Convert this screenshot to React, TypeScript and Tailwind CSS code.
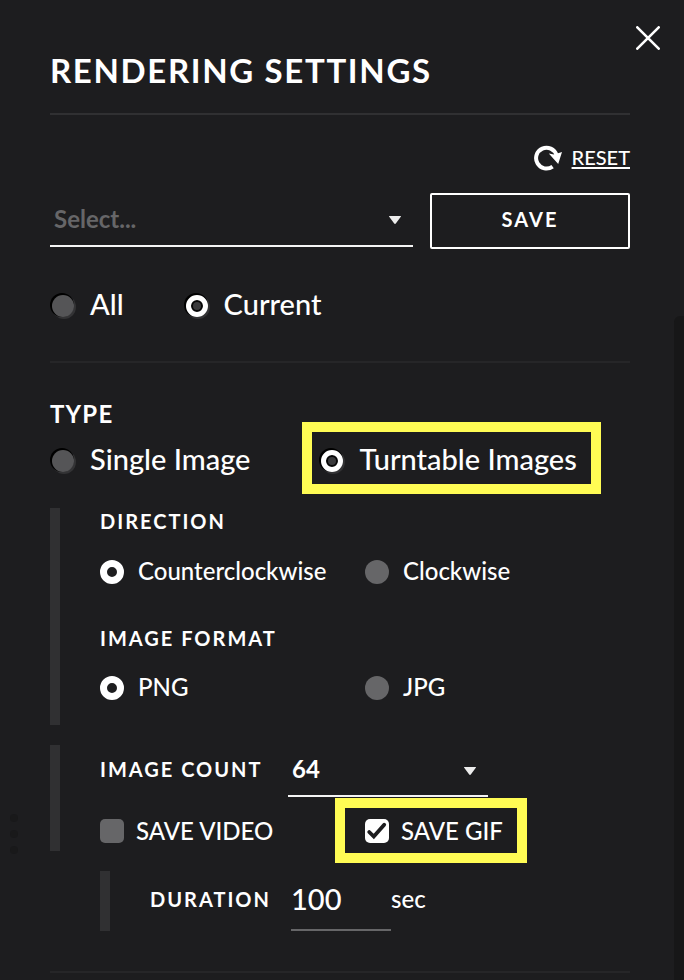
import * as React from "react";
import clsx from "clsx";

interface ChoiceProps {
  name: string;
  label: string;
  checked: boolean;
  onChange: () => void;
  size?: "lg" | "md";
  highlighted?: boolean;
}

function Caret() {
  return (
    <svg viewBox="0 0 12 8" className="pointer-events-none -ml-6 mt-[2px] h-2 w-3 shrink-0" aria-hidden="true">
      <path d="M0.5 0h11c.5 0 .6.4.3.8L6.8 7.5c-.4.6-1.2.6-1.6 0L.2.8C-.1.4 0 0 .5 0z" fill="#ececec" />
    </svg>
  );
}

function Divider({ strong }: { strong?: boolean }) {
  return <hr className={clsx("border-t-2", strong ? "border-[#303032]" : "border-[#262628]")} />;
}

// Yellow callout frame drawn over a control.
function Callout({ className }: { className: string }) {
  return <span className={clsx("pointer-events-none absolute border-[10px] border-[#fffc54]", className)} />;
}

function Choice({ name, label, checked, onChange, size = "md", highlighted }: ChoiceProps) {
  const large = size === "lg";
  return (
    <label
      className={clsx(
        "relative flex w-fit cursor-pointer items-center gap-[14px] whitespace-nowrap",
        large ? "text-[29px] leading-[34px]" : "text-2xl leading-[30px]"
      )}
    >
      <input
        type="radio"
        name={name}
        checked={checked}
        onChange={onChange}
        className={clsx(
          "shrink-0 appearance-none rounded-full",
          large
            ? "mx-[2px] mt-[2px] size-[22px] bg-[#555557] shadow-[-1px_-1px_0_1px_#000,1px_1px_0_1px_#333335] checked:border-[5px] checked:border-white checked:bg-[#39393b] checked:shadow-[inset_0_0_0_2px_#060606,-1px_-1px_0_1px_#000,1px_1px_0_1px_#333335]"
            : "size-6 bg-[#666668] checked:border-[7px] checked:border-white checked:bg-[#1d1d1f]"
        )}
      />
      <span className="pb-[2px]">{label}</span>
      {highlighted && <Callout className="-top-5 -right-6 -bottom-4 -left-[17px]" />}
    </label>
  );
}

interface TickProps {
  label: string;
  checked: boolean;
  onChange: (v: boolean) => void;
  highlighted?: boolean;
}

function Tick({ label, checked, onChange, highlighted }: TickProps) {
  return (
    <label className="relative flex w-fit cursor-pointer items-center gap-3 text-2xl whitespace-nowrap">
      <span className="grid size-6 shrink-0">
        <input
          type="checkbox"
          checked={checked}
          onChange={(e) => onChange(e.target.checked)}
          className="col-start-1 row-start-1 size-6 appearance-none rounded-[5px] bg-[#666668] checked:bg-white"
        />
        {checked && (
          <svg viewBox="0 0 24 24" className="pointer-events-none col-start-1 row-start-1 size-6" aria-hidden="true">
            <path
              d="M4.2 13 8.8 17.6 19.2 5.8"
              fill="none"
              stroke="#1d1d1f"
              strokeWidth="3.8"
              strokeLinecap="round"
              strokeLinejoin="miter"
            />
          </svg>
        )}
      </span>
      {label}
      {highlighted && <Callout className="-top-[17px] -right-6 -bottom-4 -left-[30px]" />}
    </label>
  );
}

const HEADING = "text-xl leading-[26px] font-bold tracking-widest";

export default function App() {
  const [preset, setPreset] = React.useState("");
  const [scope, setScope] = React.useState("current");
  const [type, setType] = React.useState("turntable");
  const [direction, setDirection] = React.useState("ccw");
  const [format, setFormat] = React.useState("png");
  const [count, setCount] = React.useState("64");
  const [video, setVideo] = React.useState(false);
  const [gif, setGif] = React.useState(true);
  const [duration, setDuration] = React.useState("100");

  return (
    <div className="relative flex min-h-screen bg-[#1d1d1f] font-['Lato','Liberation_Sans',sans-serif] font-medium text-white">
      {/* Grip on the panel's edge */}
      <div className="absolute top-[814px] left-[10px] flex flex-col gap-2">
        <span className="size-2 rounded-full bg-[#19191a]" />
        <span className="size-2 rounded-full bg-[#19191a]" />
        <span className="size-2 rounded-full bg-[#19191a]" />
      </div>

      <main className="flex-1 pr-11 pl-[50px]">
        <header className="flex items-start justify-between pb-[25px]">
          <h1 className="pt-[52px] text-[33px] leading-9 font-bold tracking-wider whitespace-nowrap">
            RENDERING SETTINGS
          </h1>
          <button type="button" aria-label="Close" className="mt-[26px] -mr-[30px]">
            <svg viewBox="0 0 24 24" className="size-6" fill="none" stroke="white" strokeWidth="2.6" strokeLinecap="round">
              <path d="M1.3 1.3 22.7 22.7M22.7 1.3 1.3 22.7" />
            </svg>
          </button>
        </header>
        <Divider strong />

        <div className="mt-7 flex justify-end">
          <button type="button" className="flex items-center gap-[10px] text-xl leading-7">
            <svg viewBox="0 0 28 26" className="mt-[2px] h-[26px] w-7" aria-hidden="true">
              <path d="M18.6 21.6A10.4 10.4 0 1 1 22.4 10" fill="none" stroke="white" strokeWidth="4" />
              <path d="M14.8 8.6 20 9.4 28 7 24.2 19z" fill="white" />
            </svg>
            <span className="underline decoration-2 underline-offset-2">RESET</span>
          </button>
        </div>

        <div className="mt-[22px] flex items-start gap-[17px]">
          <div className="flex flex-1 items-center border-b-2 border-[#f4f4f4]">
            <select
              aria-label="Preset"
              value={preset}
              onChange={(e) => setPreset(e.target.value)}
              className={clsx("h-[52px] w-full appearance-none pl-1 text-2xl font-bold", preset === "" && "text-[#666668]")}
            >
              <option value="">Select...</option>
            </select>
            <Caret />
          </div>
          <button
            type="button"
            className="h-14 w-[200px] rounded-xs border-2 border-white pb-1 text-xl font-bold tracking-widest"
          >
            SAVE
          </button>
        </div>

        <div className="mt-[38px] mb-[38px] flex gap-[60px]">
          <Choice name="scope" size="lg" label="All" checked={scope === "all"} onChange={() => setScope("all")} />
          <Choice name="scope" size="lg" label="Current" checked={scope === "current"} onChange={() => setScope("current")} />
        </div>
        <Divider />

        <h2 className="mt-[35px] text-2xl font-bold tracking-wider">TYPE</h2>
        <div className="mt-3 flex gap-[69px]">
          <Choice name="type" size="lg" label="Single Image" checked={type === "single"} onChange={() => setType("single")} />
          <Choice
            name="type"
            size="lg"
            label="Turntable Images"
            checked={type === "turntable"}
            onChange={() => setType("turntable")}
            highlighted
          />
        </div>

        <section className="mt-[30px] border-l-[10px] border-[#303032] pb-[21px] pl-10">
          <h3 className={HEADING}>DIRECTION</h3>
          <div className="mt-[22px] grid grid-cols-[265px_1fr]">
            <Choice name="direction" label="Counterclockwise" checked={direction === "ccw"} onChange={() => setDirection("ccw")} />
            <Choice name="direction" label="Clockwise" checked={direction === "cw"} onChange={() => setDirection("cw")} />
          </div>
          <h3 className={clsx("mt-[37px]", HEADING)}>IMAGE FORMAT</h3>
          <div className="mt-[21px] grid grid-cols-[265px_1fr]">
            <Choice name="format" label="PNG" checked={format === "png"} onChange={() => setFormat("png")} />
            <Choice name="format" label="JPG" checked={format === "jpg"} onChange={() => setFormat("jpg")} />
          </div>
        </section>

        <section className="mt-5 border-l-[10px] border-[#303032] pb-1 pl-10">
          <div className="grid grid-cols-[188px_200px] items-center">
            <label htmlFor="count" className={clsx("pb-1", HEADING)}>
              IMAGE COUNT
            </label>
            <div className="flex items-center border-b-2 border-[#f4f4f4]">
              <select
                id="count"
                value={count}
                onChange={(e) => setCount(e.target.value)}
                className="h-[50px] w-full appearance-none pb-[2px] pl-1 text-2xl font-bold"
              >
                <option>16</option>
                <option>32</option>
                <option>64</option>
              </select>
              <Caret />
            </div>
          </div>
          <div className="mt-[18px] grid grid-cols-[265px_1fr]">
            <Tick label="SAVE VIDEO" checked={video} onChange={setVideo} />
            <Tick label="SAVE GIF" checked={gif} onChange={setGif} highlighted />
          </div>
        </section>

        <section className="mt-5 ml-[50px] grid grid-cols-[141px_100px_1fr] items-center border-l-[10px] border-[#303032] pl-10">
          <label htmlFor="duration" className={clsx("pb-1", HEADING)}>
            DURATION
          </label>
          <input
            id="duration"
            type="text"
            value={duration}
            onChange={(e) => setDuration(e.target.value)}
            className="h-[60px] w-full border-b-2 border-[#666668] pb-1 text-[29px] outline-none"
          />
          <span className="pb-1 text-2xl">sec</span>
        </section>

        <div className="mt-10 pb-[7px]">
          <Divider />
        </div>
      </main>

      {/* Scrollbar thumb */}
      <div className="mt-[316px] w-[10px] rounded-tl-md bg-[#171718]" />
    </div>
  );
}
